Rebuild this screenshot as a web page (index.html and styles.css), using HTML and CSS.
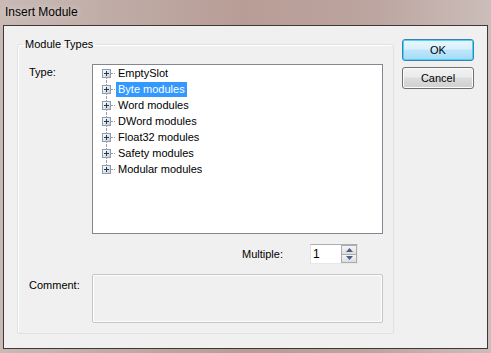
FILE: index.html
```html
<!DOCTYPE html>
<html lang="en">

<head>
    <meta charset="UTF-8">
    <title>Insert Module</title>
    <link rel="stylesheet" href="styles.css">
</head>

<body>
    <div class="window">
        <!-- Title bar -->
        <div class="titlebar">
            <span class="title">Insert Module</span>
        </div>

        <!-- Dialog body -->
        <div class="client">
            <fieldset class="group">
                <legend>Module Types</legend>

                <div class="field-row">
                    <span class="field-label type-label">Type:</span>
                    <ul class="tree">
                        <li class="node first"><span class="expander"><svg width="9" height="9" viewBox="0 0 9 9"><defs><linearGradient id="pg" x1="0" y1="0" x2="1" y2="1"><stop offset="0" stop-color="#ffffff"/><stop offset="1" stop-color="#c6cdd6"/></linearGradient></defs><rect x="0.5" y="0.5" width="8" height="8" fill="url(#pg)" stroke="#8e9cab"/><path d="M2 4.5h5M4.5 2v5" stroke="#23395a"/></svg></span><span class="connector"></span><span class="node-text">EmptySlot</span></li>
                        <li class="node"><span class="expander"><svg width="9" height="9" viewBox="0 0 9 9"><rect x="0.5" y="0.5" width="8" height="8" fill="url(#pg)" stroke="#8e9cab"/><path d="M2 4.5h5M4.5 2v5" stroke="#23395a"/></svg></span><span class="connector"></span><span class="node-text selected">Byte modules</span></li>
                        <li class="node"><span class="expander"><svg width="9" height="9" viewBox="0 0 9 9"><rect x="0.5" y="0.5" width="8" height="8" fill="url(#pg)" stroke="#8e9cab"/><path d="M2 4.5h5M4.5 2v5" stroke="#23395a"/></svg></span><span class="connector"></span><span class="node-text">Word modules</span></li>
                        <li class="node"><span class="expander"><svg width="9" height="9" viewBox="0 0 9 9"><rect x="0.5" y="0.5" width="8" height="8" fill="url(#pg)" stroke="#8e9cab"/><path d="M2 4.5h5M4.5 2v5" stroke="#23395a"/></svg></span><span class="connector"></span><span class="node-text">DWord modules</span></li>
                        <li class="node"><span class="expander"><svg width="9" height="9" viewBox="0 0 9 9"><rect x="0.5" y="0.5" width="8" height="8" fill="url(#pg)" stroke="#8e9cab"/><path d="M2 4.5h5M4.5 2v5" stroke="#23395a"/></svg></span><span class="connector"></span><span class="node-text">Float32 modules</span></li>
                        <li class="node"><span class="expander"><svg width="9" height="9" viewBox="0 0 9 9"><rect x="0.5" y="0.5" width="8" height="8" fill="url(#pg)" stroke="#8e9cab"/><path d="M2 4.5h5M4.5 2v5" stroke="#23395a"/></svg></span><span class="connector"></span><span class="node-text">Safety modules</span></li>
                        <li class="node last"><span class="expander"><svg width="9" height="9" viewBox="0 0 9 9"><rect x="0.5" y="0.5" width="8" height="8" fill="url(#pg)" stroke="#8e9cab"/><path d="M2 4.5h5M4.5 2v5" stroke="#23395a"/></svg></span><span class="connector"></span><span class="node-text">Modular modules</span></li>
                    </ul>
                </div>

                <div class="multiple-row">
                    <span class="multiple-label">Multiple:</span>
                    <div class="spin">
                        <span class="spin-value">1</span>
                        <div class="spin-buttons">
                            <span class="spin-btn"><svg width="7" height="4" viewBox="0 0 7 4"><path d="M3.5 0L7 4H0z" fill="#4a5f86"/></svg></span>
                            <span class="spin-btn"><svg width="7" height="4" viewBox="0 0 7 4"><path d="M0 0H7L3.5 4z" fill="#4a5f86"/></svg></span>
                        </div>
                    </div>
                </div>

                <div class="field-row comment-row">
                    <span class="field-label comment-label">Comment:</span>
                    <div class="comment-box"></div>
                </div>
            </fieldset>

            <div class="buttons">
                <button class="btn btn-default">OK</button>
                <button class="btn">Cancel</button>
            </div>
        </div>
    </div>
</body>

</html>
```

FILE: styles.css
```css
/* Dialog window */
body {
    margin: 0;
    padding: 0;
    font-family: "Liberation Sans", Arial, sans-serif;
    font-size: 11px;
    color: #000;
}

.window {
    width: 491px;
    height: 353px;
    box-sizing: border-box;
    padding: 0 3px 4px 3px;
    display: flex;
    flex-direction: column;
    background: linear-gradient(90deg, #c9bab6 0%, #c0aca7 22%, #b89d96 50%, #bca49f 75%, #cbbdb9 100%);
}

.titlebar {
    height: 25px;
    padding-left: 2px;
    flex-shrink: 0;
}

.title {
    display: block;
    font-size: 12px;
    line-height: 24px;
    color: #000;
    text-shadow: 0 0 6px rgba(255, 255, 255, 0.6);
}

.client {
    flex: 1;
    display: flex;
    align-items: flex-start;
    gap: 8px;
    padding: 12px 13px 0 13px;
    background-color: #f0f0f0;
    border: 1px solid #3e3938;
}

/* Group box */
.group {
    width: 377px;
    box-sizing: border-box;
    margin: 0;
    padding: 13px 10px 10px 11px;
    min-width: 0;
    border: 1px solid #dce2e6;
    border-radius: 3px;
    box-shadow: inset 1px 1px 0 #fff;
}

.group legend {
    margin-left: -6px;
    padding: 0 2px;
    line-height: 13px;
}

.field-row {
    display: grid;
    grid-template-columns: 63px 1fr;
}

.field-label {
    line-height: 13px;
}

.type-label {
    padding-top: 2px;
}

/* Tree view */
.tree {
    list-style: none;
    margin: 0;
    padding: 0;
    height: 170px;
    box-sizing: border-box;
    background-color: #fff;
    border: 1px solid #828790;
}

.node {
    position: relative;
    display: flex;
    align-items: center;
    height: 16px;
    padding-left: 9px;
}

.node::before {
    content: "";
    position: absolute;
    left: 13px;
    top: 0;
    bottom: 0;
    border-left: 1px dotted #a0a0a0;
}

.node.first::before {
    top: 50%;
}

.node.last::before {
    bottom: 50%;
}

.expander {
    position: relative;
    display: flex;
    width: 9px;
    height: 9px;
}

.connector {
    width: 4px;
    margin-right: 1px;
    border-top: 1px dotted #a0a0a0;
}

.node-text {
    padding: 1px 2px;
    line-height: 13px;
    white-space: nowrap;
}

.node-text.selected {
    background-color: #3399ff;
    color: #fff;
}

/* Multiple spin box */
.multiple-row {
    display: flex;
    align-items: center;
    margin-top: 10px;
    padding-left: 213px;
    height: 20px;
}

.multiple-label {
    width: 68px;
}

.spin {
    display: flex;
    width: 48px;
    height: 20px;
    box-sizing: border-box;
    background-color: #fff;
    border: 1px solid #e3e9ef;
    border-top-color: #abadb3;
    border-left-color: #e2e3ea;
}

.spin-value {
    flex: 1;
    padding-left: 2px;
    font-size: 12px;
    line-height: 18px;
}

.spin-buttons {
    display: flex;
    flex-direction: column;
    width: 16px;
}

.spin-btn {
    flex: 1;
    display: flex;
    align-items: center;
    justify-content: center;
    border: 1px solid #acacac;
    background: linear-gradient(#f6f6f6, #dcdcdc);
}

.spin-btn + .spin-btn {
    border-top: none;
}

/* Comment */
.comment-row {
    margin-top: 10px;
}

.comment-label {
    padding-top: 5px;
}

.comment-box {
    height: 49px;
    box-sizing: border-box;
    background-color: #f0f0f0;
    border: 1px solid #c5c5c5;
    border-radius: 2px;
    box-shadow: inset 1px 1px 0 #fdfdfd, inset -1px -1px 0 #fdfdfd;
}

/* Buttons */
.buttons {
    display: flex;
    flex-direction: column;
    gap: 6px;
    margin-top: 1px;
}

.btn {
    width: 72px;
    height: 22px;
    padding: 0;
    font-family: "Liberation Sans", Arial, sans-serif;
    font-size: 11px;
    color: #000;
    border: 1px solid #707070;
    border-radius: 3px;
    background: linear-gradient(#f2f2f2 0%, #ebebeb 45%, #dddddd 50%, #cfcfcf 100%);
    box-shadow: inset 0 0 0 1px #fbfbfb;
}

.btn-default {
    border-color: #3c7fb1;
    background: linear-gradient(#eaf6fd 0%, #d9f0fc 45%, #bee6fd 50%, #a7d9f5 100%);
    box-shadow: inset 0 0 0 1px #48d4fb;
}
```
